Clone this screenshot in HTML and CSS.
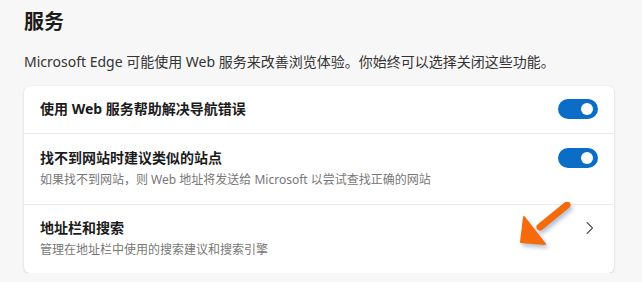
FILE: index.html
```html
<!DOCTYPE html>
<html lang="zh-CN">
<head>
  <meta charset="UTF-8" />
  <title>服务</title>
  <link rel="stylesheet" href="styles.css">
</head>
<body>

<div class="page">
  <h1>服务</h1>
  <p class="intro">Microsoft Edge 可能使用 Web 服务来改善浏览体验。你始终可以选择关闭这些功能。</p>

  <div class="card">
    <div class="row">
      <div class="text">
        <div class="title">使用 Web 服务帮助解决导航错误</div>
      </div>
      <span class="toggle on"><span class="knob"></span></span>
    </div>

    <div class="row">
      <div class="text">
        <div class="title">找不到网站时建议类似的站点</div>
        <div class="sub">如果找不到网站，则 Web 地址将发送给 Microsoft 以尝试查找正确的网站</div>
      </div>
      <span class="toggle on"><span class="knob"></span></span>
    </div>

    <div class="row link">
      <div class="text">
        <div class="title">地址栏和搜索</div>
        <div class="sub">管理在地址栏中使用的搜索建议和搜索引擎</div>
      </div>
      <svg class="chevron" width="20" height="20" viewBox="0 0 20 20">
        <path d="M9 4.5 L14.5 10 L9 15.5" fill="none" stroke="#555" stroke-width="1.1" stroke-linecap="round" stroke-linejoin="round"/>
      </svg>
    </div>

    <!-- annotation arrow -->
    <svg class="arrow" width="60" height="50" viewBox="0 0 60 50">
      <line x1="47" y1="3" x2="20" y2="25" stroke="#f56b0c" stroke-width="7" stroke-linecap="round"/>
      <polygon points="4,15 1,40 25,42" fill="#f56b0c" stroke="#f56b0c" stroke-width="2" stroke-linejoin="round"/>
    </svg>
  </div>
</div>

</body>
</html>
```

FILE: styles.css
```css
* {
  margin: 0;
  padding: 0;
  box-sizing: border-box;
}

body {
  font-family: "Noto Sans", "Noto Sans CJK SC", sans-serif;
  background: #f7f7f7;
  color: #1b1b1b;
}

.page {
  padding: 8px 28px 0 24px;
}

h1 {
  font-size: 20px;
  line-height: 28px;
  font-weight: 700;
  color: #1b1b1b;
}

.intro {
  margin-top: 16px;
  font-size: 14px;
  line-height: 20px;
  color: #333;
}

.card {
  position: relative;
  margin-top: 14px;
  background: #fff;
  border-radius: 6px;
  box-shadow: 0 1px 3px rgba(0,0,0,0.13), 0 0 1px rgba(0,0,0,0.1);
}

.row {
  display: flex;
  align-items: flex-start;
  justify-content: space-between;
  padding: 13px 16px 14px 16px;
  border-top: 1px solid #ebebeb;
}

.row:first-child {
  border-top: none;
}

.row:nth-child(2) {
  padding-top: 14px;
  padding-bottom: 15px;
}

.title {
  font-size: 14px;
  line-height: 20px;
  font-weight: 700;
  color: #1b1b1b;
}

.sub {
  margin-top: 3px;
  font-size: 12px;
  line-height: 18px;
  color: #777;
}

.toggle {
  position: relative;
  width: 40px;
  height: 20px;
  border-radius: 10px;
  background: #0c6dc6;
  flex-shrink: 0;
}

.toggle .knob {
  position: absolute;
  top: 4px;
  right: 5px;
  width: 12px;
  height: 12px;
  border-radius: 50%;
  background: #fff;
}

.chevron {
  flex-shrink: 0;
}

.arrow {
  position: absolute;
  left: 496px;
  top: 116px;
  filter: drop-shadow(2px 3px 2px rgba(90,110,150,0.45));
}
```
